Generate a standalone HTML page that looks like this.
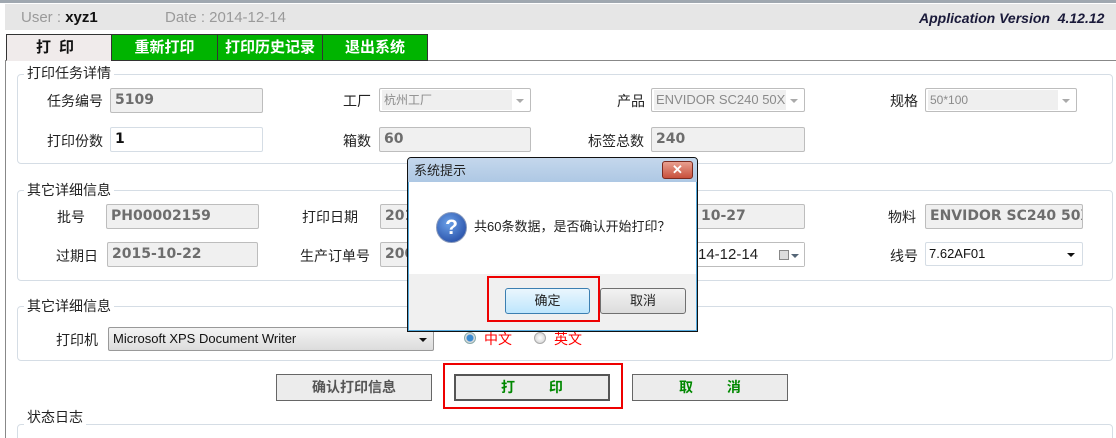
<!DOCTYPE html>
<html><head><meta charset="utf-8"><style>
*{margin:0;padding:0;box-sizing:border-box}
html,body{width:1116px;height:438px;overflow:hidden}
body{background:#fff;position:relative;font-family:"Liberation Sans","Noto Sans CJK SC",sans-serif;font-size:13px;color:#222}
.a{position:absolute}
.lbl{position:absolute;font-size:14px;color:#222;line-height:16px;white-space:nowrap}
.in{position:absolute;height:25px;border:1px solid #bdbdbd;border-radius:2px;background:#f0f0f0;font-weight:bold;font-family:"DejaVu Sans",sans-serif;font-size:14px;color:#6d6d6d;line-height:23px;padding-left:4px;white-space:nowrap;overflow:hidden}
.sel{position:absolute;height:24px;border:1px solid #bdbdbd;border-radius:2px;background:#fff;font-size:12px;color:#8a8a8a;line-height:20px;white-space:nowrap;overflow:hidden}
.sel span{position:absolute;left:2px;top:1px;bottom:1px;right:18px;background:#efefef;padding-left:2px;overflow:hidden}
.sel i{position:absolute;right:6px;top:10px;border-left:4px solid transparent;border-right:4px solid transparent;border-top:4px solid #aaa}
.grp{position:absolute;border:1px solid #d5dde5;border-radius:4px}
.gt{position:absolute;background:#fff;padding:0 3px;font-size:14px;line-height:15px;color:#222}
.tab{position:absolute;top:34px;height:27px;border:1px solid #333;background:#00b400;color:#fff;font-weight:bold;font-size:15px;text-align:center;line-height:25px}
.btn{position:absolute;top:374px;height:27px;border:1px solid #666;background:#ececec;font-weight:bold;font-size:14px;text-align:center;line-height:25px}
</style></head><body>
<div class="a" style="left:0;top:0;width:1116px;height:3px;background:#a0a8b0"></div>
<div class="a" style="left:5px;top:4px;width:1111px;height:26px;background:#e6e6e6"></div>
<div class="lbl" style="left:21px;top:10px;font-size:15px;color:#9a9a9a">User : <b style="color:#111">xyz1</b></div>
<div class="lbl" style="left:165px;top:10px;font-size:15px;color:#9a9a9a">Date : 2014-12-14</div>
<div class="lbl" style="left:919px;top:10px;font-size:14px;color:#1a1a3a;font-weight:bold;font-style:italic">Application Version&nbsp; 4.12.12</div>

<div class="a" style="left:5px;top:60px;width:1115px;height:378px;border:1px solid #888;border-bottom:none"></div>
<div class="tab" style="left:6px;width:106px;background:#f0ebeb;color:#111;border-bottom-color:#f0ebeb;letter-spacing:8px">打印</div>
<div class="tab" style="left:111px;width:107px">重新打印</div>
<div class="tab" style="left:217px;width:106px">打印历史记录</div>
<div class="tab" style="left:322px;width:106px">退出系统</div>

<div class="grp" style="left:17px;top:74px;width:1096px;height:90px"></div>
<div class="gt" style="left:24px;top:66px">打印任务详情</div>
<div class="lbl" style="left:47px;top:93px">任务编号</div>
<div class="in" style="left:110px;top:88px;width:153px">5109</div>
<div class="lbl" style="left:343px;top:93px">工厂</div>
<div class="sel" style="left:379px;top:88px;width:152px"><span>杭州工厂</span><i></i></div>
<div class="lbl" style="left:617px;top:93px">产品</div>
<div class="sel" style="left:651px;top:88px;width:154px;font-size:13px"><span>ENVIDOR SC240 50X1</span><i></i></div>
<div class="lbl" style="left:890px;top:93px">规格</div>
<div class="sel" style="left:925px;top:88px;width:152px"><span>50*100</span><i></i></div>
<div class="lbl" style="left:47px;top:133px">打印份数</div>
<div class="in" style="left:110px;top:127px;width:153px;background:#fff;border-color:#d5dde5;color:#111">1</div>
<div class="lbl" style="left:343px;top:133px">箱数</div>
<div class="in" style="left:379px;top:127px;width:152px">60</div>
<div class="lbl" style="left:588px;top:133px">标签总数</div>
<div class="in" style="left:651px;top:127px;width:154px">240</div>

<div class="grp" style="left:17px;top:190px;width:1096px;height:91px"></div>
<div class="gt" style="left:24px;top:183px">其它详细信息</div>
<div class="lbl" style="left:57px;top:209px">批号</div>
<div class="in" style="left:106px;top:204px;width:153px">PH00002159</div>
<div class="lbl" style="left:302px;top:209px">打印日期</div>
<div class="in" style="left:380px;top:204px;width:425px">201</div>
<div class="in" style="left:698px;top:205px;width:100px;border:none;background:transparent;padding-left:3px">10-27</div>
<div class="lbl" style="left:888px;top:209px">物料</div>
<div class="in" style="left:925px;top:204px;width:158px">ENVIDOR SC240 50X1</div>
<div class="lbl" style="left:56px;top:248px">过期日</div>
<div class="in" style="left:107px;top:242px;width:151px">2015-10-22</div>
<div class="lbl" style="left:300px;top:248px">生产订单号</div>
<div class="in" style="left:380px;top:242px;width:425px">200</div>
<div class="a" style="left:697px;top:243px;width:107px;height:23px;background:#fff;font-size:15px;line-height:23px;padding-left:1px">14-12-14</div>
<div class="a" style="left:779px;top:250px;width:10px;height:10px;border:1px solid #888;background:#ddd"></div>
<div class="a" style="left:791px;top:254px;border-left:4px solid transparent;border-right:4px solid transparent;border-top:4px solid #567"></div>
<div class="lbl" style="left:890px;top:248px">线号</div>
<div class="sel" style="left:925px;top:242px;width:158px;color:#111;font-size:13px;border-color:#d5dde5;line-height:22px;padding-left:3px">7.62AF01<i style="border-top-color:#111;right:7px"></i></div>

<div class="grp" style="left:17px;top:306px;width:1096px;height:55px"></div>
<div class="gt" style="left:24px;top:299px">其它详细信息</div>
<div class="lbl" style="left:56px;top:332px">打印机</div>
<div class="a" style="left:108px;top:327px;width:326px;height:24px;border:1px solid #999;border-radius:2px;background:linear-gradient(#f4f4f4,#dcdcdc);font-size:13px;line-height:22px;padding-left:4px;color:#111">Microsoft XPS Document Writer<i style="position:absolute;right:6px;top:10px;border-left:4px solid transparent;border-right:4px solid transparent;border-top:4px solid #111"></i></div>
<div class="a" style="left:464px;top:332px;width:12px;height:12px;border-radius:50%;border:1px solid #8aa;background:radial-gradient(#3a8ad0 0 3px,#ddd 4px)"></div>
<div class="lbl" style="left:484px;top:331px;color:#f00">中文</div>
<div class="a" style="left:534px;top:332px;width:12px;height:12px;border-radius:50%;border:1px solid #aaa;background:radial-gradient(#fff,#ccc)"></div>
<div class="lbl" style="left:554px;top:331px;color:#f00">英文</div>

<div class="btn" style="left:276px;width:156px;color:#555">确认打印信息</div>
<div class="a" style="left:443px;top:363px;width:180px;height:46px;border:2px solid #e00"></div>
<div class="btn" style="left:454px;width:156px;border:2px solid #555;color:#080;line-height:23px;word-spacing:30px">打 印</div>
<div class="btn" style="left:632px;width:156px;color:#080;word-spacing:30px">取 消</div>

<div class="grp" style="left:17px;top:424px;width:1096px;height:30px"></div>
<div class="gt" style="left:24px;top:410px">状态日志</div>

<div class="a" style="left:407px;top:157px;width:291px;height:175px;border:1px solid #111;border-radius:4px 4px 0 0;background:#f0f0f0;box-shadow:inset 0 0 0 1px #5ad;"></div>
<div class="a" style="left:408px;top:158px;width:289px;height:24px;background:linear-gradient(#c4d7ec,#aec8e4);border-radius:3px 3px 0 0"></div>
<div class="lbl" style="left:414px;top:163px;font-size:13px">系统提示</div>
<div class="a" style="left:662px;top:161px;width:31px;height:18px;border:1px solid #7a2a20;border-radius:3px;background:linear-gradient(#e8a090,#c8503c);color:#fff;font-weight:bold;font-size:13px;text-align:center;line-height:15px">✕</div>
<div class="a" style="left:409px;top:182px;width:287px;height:92px;background:#fff"></div>
<div class="a" style="left:436px;top:212px;width:31px;height:31px;border-radius:50%;border:1px solid #8899bb;background:radial-gradient(circle at 40% 35%,#6aa0e8,#1a3f9a);color:#fff;font-weight:bold;font-size:21px;text-align:center;line-height:29px">?</div>
<div class="lbl" style="left:474px;top:219px;font-size:13px">共60条数据，是否确认开始打印？</div>
<div class="a" style="left:487px;top:276px;width:113px;height:46px;border:2px solid #e00"></div>
<div class="a" style="left:505px;top:288px;width:85px;height:26px;border:1px solid #3c7fb1;border-radius:3px;background:linear-gradient(#eaf6fd,#bee6fd);text-align:center;line-height:24px;font-size:13px">确定</div>
<div class="a" style="left:600px;top:288px;width:86px;height:26px;border:1px solid #707070;border-radius:3px;background:linear-gradient(#f2f2f2,#dcdcdc);text-align:center;line-height:24px;font-size:13px">取消</div>
</body></html>
